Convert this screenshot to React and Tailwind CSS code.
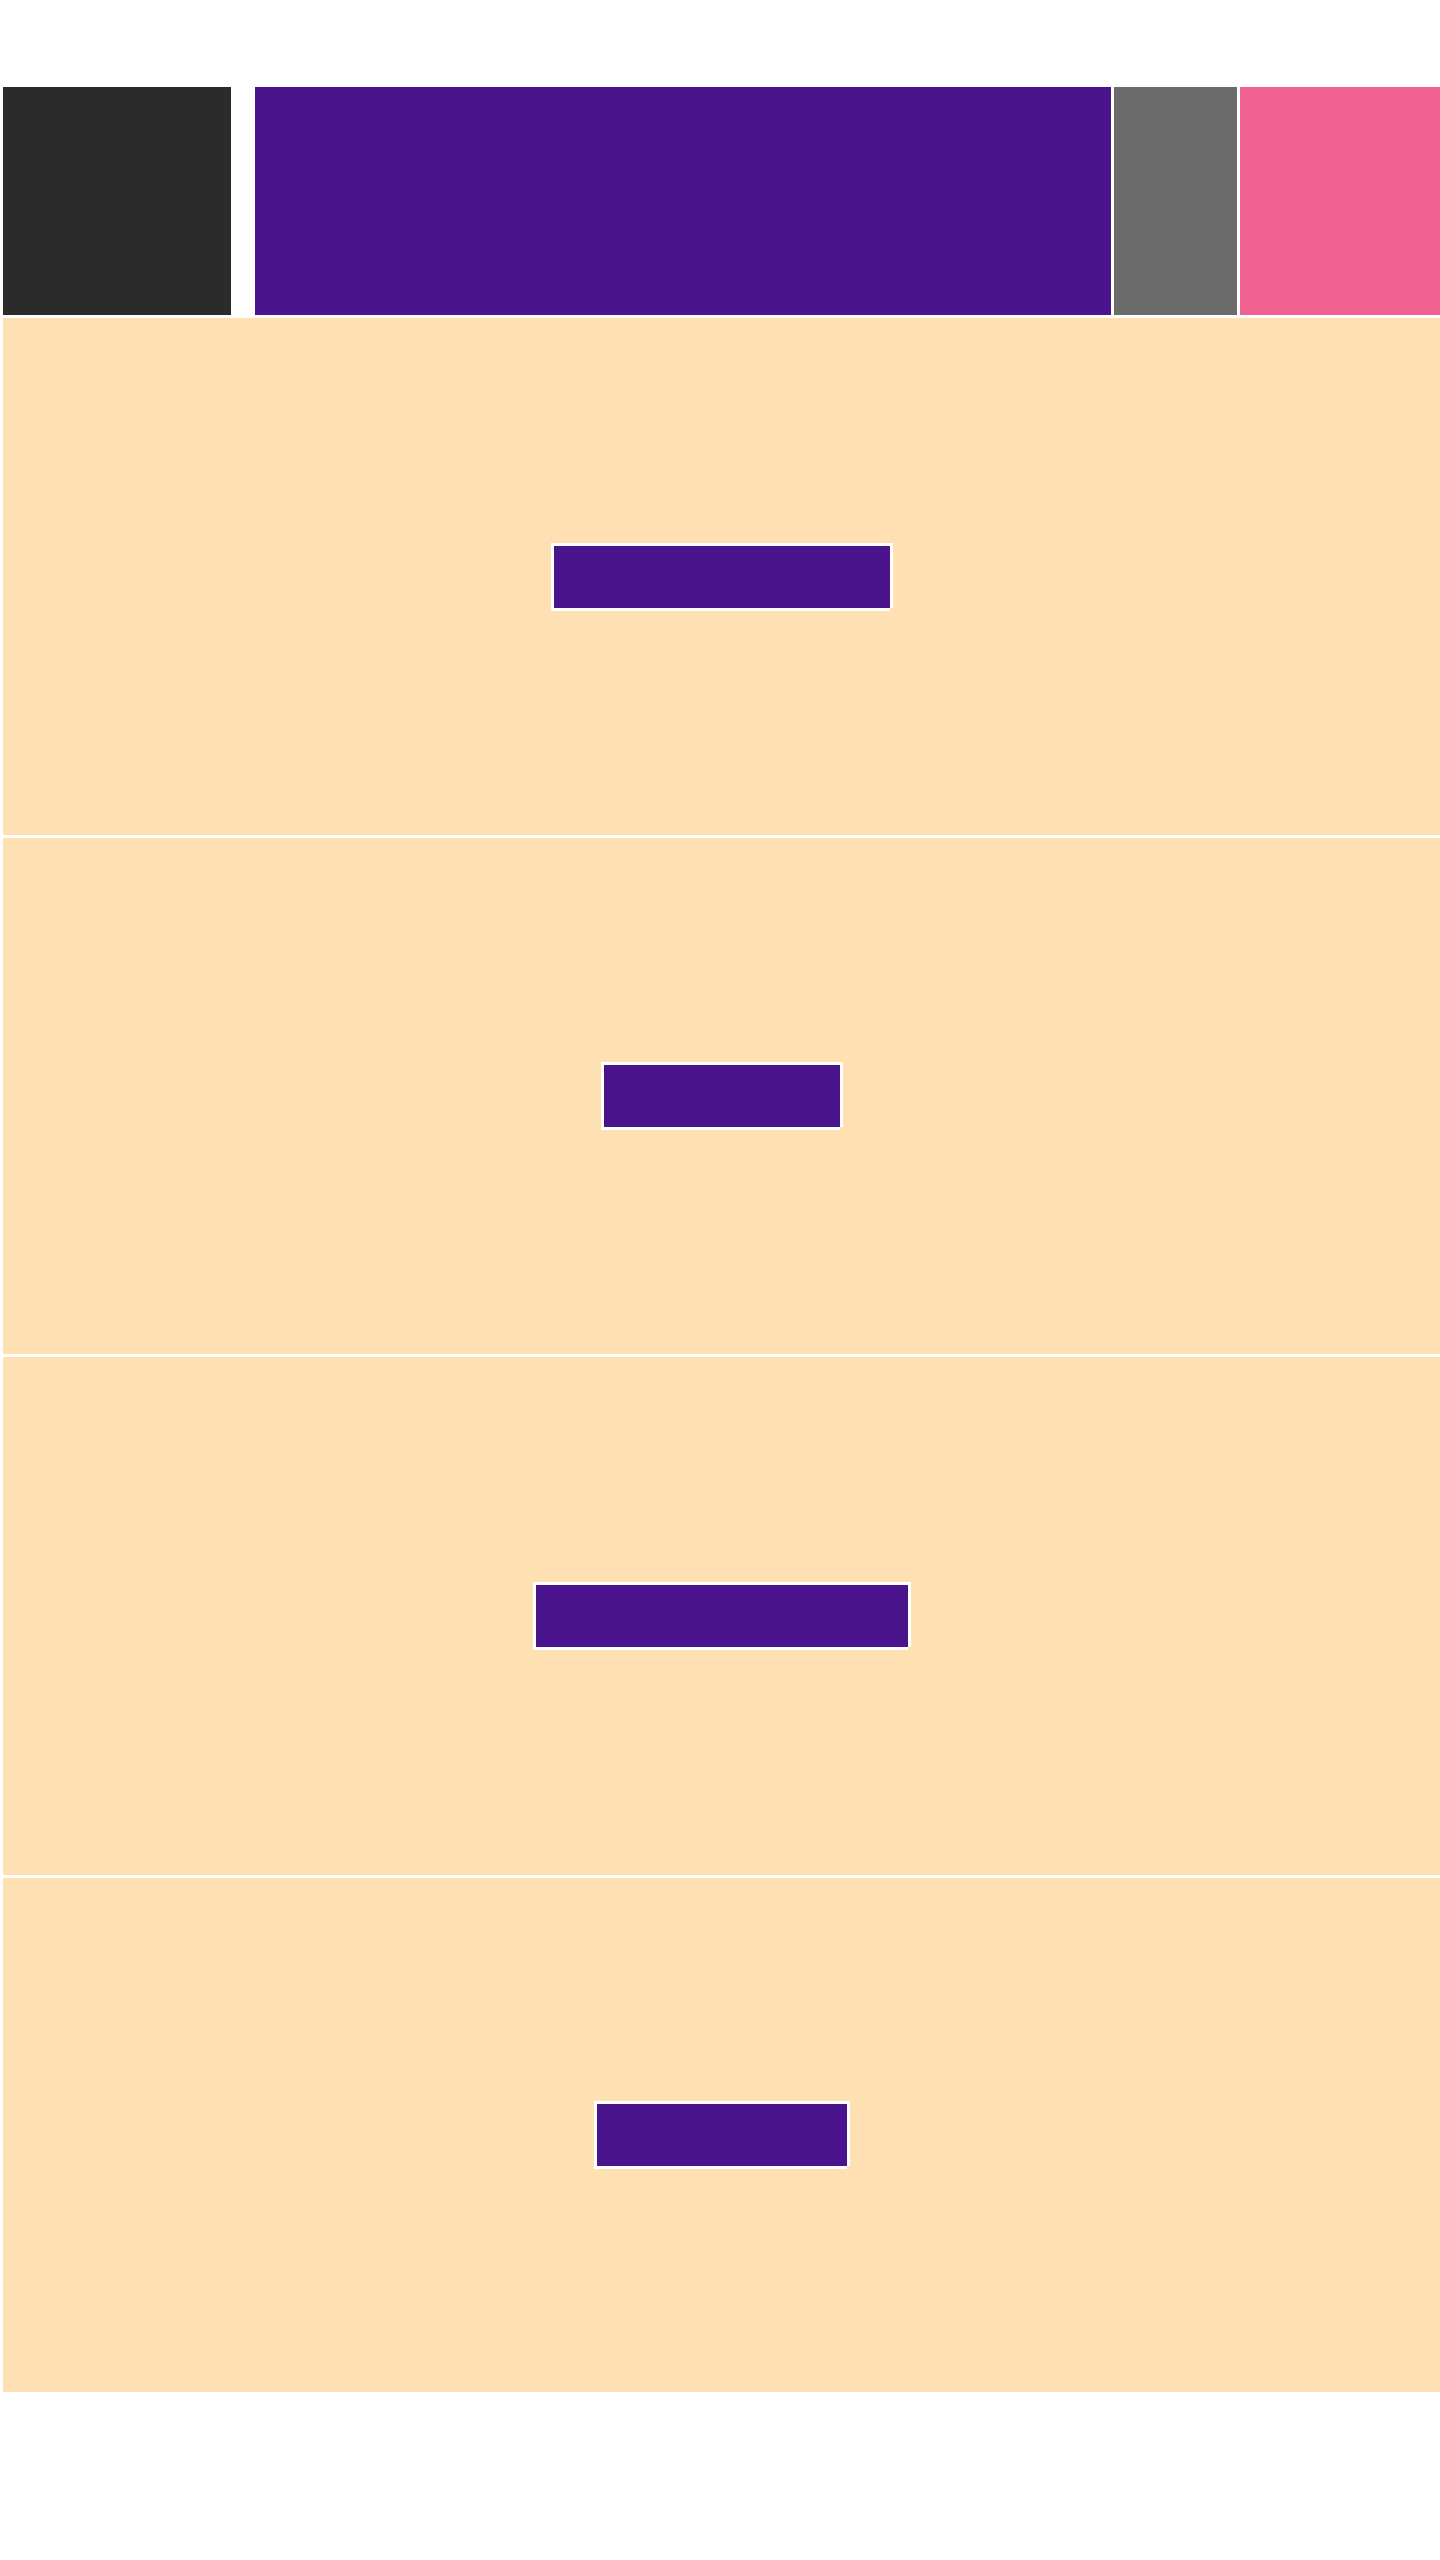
import React from "react";

const frame =
  "shadow-[-3px_-3px_0_0_#ffffff,3px_-3px_0_0_#ffffff,-3px_3px_0_0_#ffffff,3px_0_0_0_#ffffff,0_3px_0_0_#ffffff]";

function Section({ h, w }) {
  return (
    <section className={`flex items-center justify-center bg-[#ffe0b2] ${h}`}>
      <button type="button" className={`h-[62px] bg-[#4a148c] ${w} ${frame}`} aria-label="action" />
    </section>
  );
}

export default function App() {
  return (
    <div className="min-h-[2560px] bg-white pt-[87px] pl-[3px] font-['Liberation_Sans',sans-serif]">
      <header className="flex h-[228px] gap-[3px]">
        <div className="mr-[21px] w-[228px] shrink-0 bg-[#2b2b2b]" />
        <div className="w-[856px] shrink-0 bg-[#4a148c]" />
        <div className="w-[123px] shrink-0 bg-[#6b6b6b]" />
        <div className="flex-1 bg-[#f06292]" />
      </header>
      <main className="mt-[3px] flex flex-col gap-[3px]">
        <Section h="h-[517px]" w="w-[336px]" />
        <Section h="h-[516px]" w="w-[236px]" />
        <Section h="h-[518px]" w="w-[372px]" />
        <Section h="h-[514px]" w="w-[250px]" />
      </main>
    </div>
  );
}
